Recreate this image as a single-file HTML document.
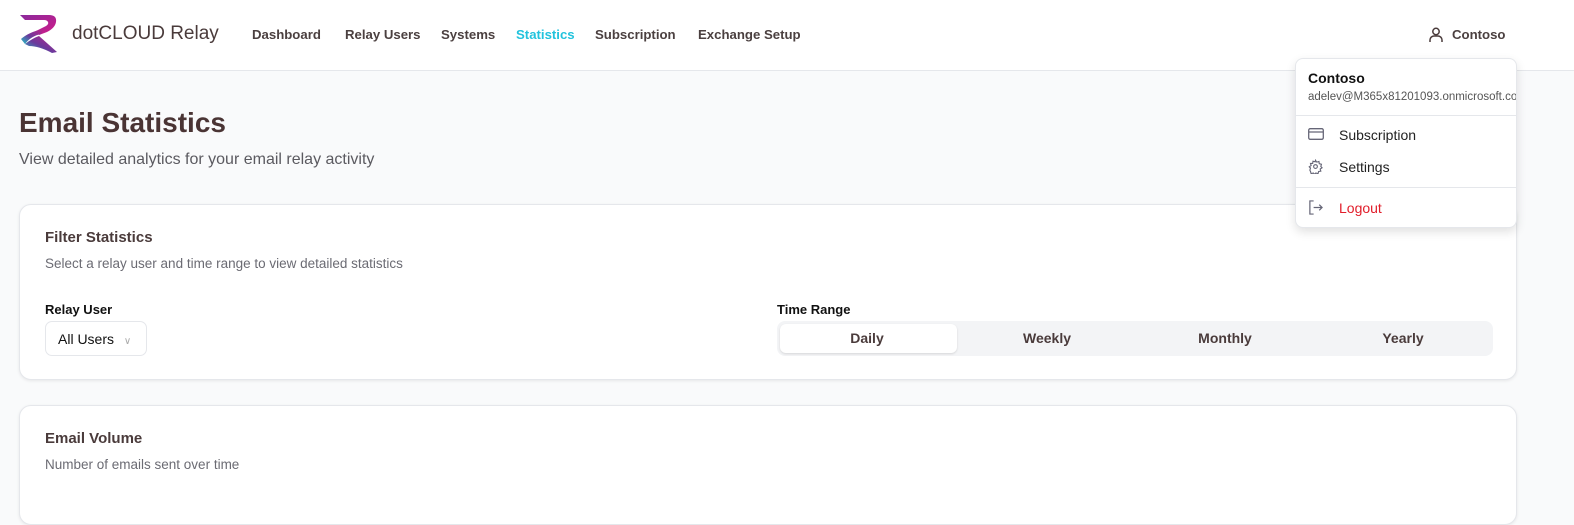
<!DOCTYPE html>
<html><head><meta charset="utf-8"><style>
*{box-sizing:border-box;margin:0;padding:0}
body{width:1574px;height:500px;overflow:hidden;background:#f9fafb;font-family:"Liberation Sans",sans-serif;color:#4a3b3b;position:relative}
.hdr{position:absolute;left:0;top:0;width:1574px;height:71px;background:#fff;border-bottom:1px solid #e5e7eb}
.brand{position:absolute;left:72px;top:23px;font-size:19px;color:#4a3b3b}
.nav{position:absolute;top:27px;font-size:13.2px;font-weight:bold;color:#4b4040}
h1{position:absolute;left:19px;top:107px;font-size:28px;font-weight:bold;color:#4a3434}
.sub{position:absolute;left:19px;top:151px;font-size:16px;color:#5b5a60}
.card{position:absolute;left:19px;width:1498px;background:#fff;border:1px solid #e5e7eb;border-radius:12px;box-shadow:0 1px 3px rgba(0,0,0,.08)}
.ct{position:absolute;left:25px;font-size:15px;font-weight:bold;color:#4a3b3b}
.cs{position:absolute;left:25px;font-size:13.5px;color:#6b6b73}
.lbl{position:absolute;font-size:13px;font-weight:bold;color:#111}
.menu{position:absolute;left:1295px;top:58px;width:222px;height:170px;background:#fff;border:1px solid #e5e7eb;border-radius:8px;box-shadow:0 4px 10px rgba(0,0,0,.12);overflow:hidden}
.mi{position:absolute;left:43px;font-size:14px;color:#222}
</style></head><body>
<div class="hdr">
<svg style="position:absolute;left:19px;top:14px" width="40" height="40" viewBox="0 0 40 40">
<defs><linearGradient id="g" x1="0" y1="1" x2="1" y2="0"><stop offset="0" stop-color="#1fc8c8"/><stop offset=".45" stop-color="#6a3a9c"/><stop offset="1" stop-color="#c0208a"/></linearGradient>
<linearGradient id="g2" x1="0" y1="0" x2="1" y2="1"><stop offset="0" stop-color="#8a2a9c"/><stop offset="1" stop-color="#d01c8a"/></linearGradient></defs>
<path d="M1 1H30Q38 1 37 8Q36 14 28 18L20 21 17 17 27 12Q30 10 29 8Q28 6 25 6H6Z" fill="url(#g2)"/>
<path d="M2 25Q10 18 24 15L22 20Q12 22 6 30Z" fill="url(#g)"/>
<path d="M6 30Q14 24 20 22L38 38 33 39Q20 32 10 32Z" fill="url(#g)"/>
</svg>
<div class="brand">dotCLOUD Relay</div>
<div class="nav" style="left:252px">Dashboard</div>
<div class="nav" style="left:345px">Relay Users</div>
<div class="nav" style="left:441px">Systems</div>
<div class="nav" style="left:516px;color:#22c3dd">Statistics</div>
<div class="nav" style="left:595px">Subscription</div>
<div class="nav" style="left:698px">Exchange Setup</div>
<svg style="position:absolute;left:1429px;top:27px" width="14" height="16" viewBox="0 0 14 16" fill="none" stroke="#4a3b3b" stroke-width="1.5"><circle cx="7" cy="4.5" r="3.2"/><path d="M1 15v-2a4 4 0 0 1 4-4h4a4 4 0 0 1 4 4v2"/></svg>
<div class="nav" style="left:1452px">Contoso</div>
</div>
<h1>Email Statistics</h1>
<div class="sub">View detailed analytics for your email relay activity</div>
<div class="card" style="top:204px;height:176px">
<div class="ct" style="top:24px">Filter Statistics</div>
<div class="cs" style="top:51px">Select a relay user and time range to view detailed statistics</div>
<div class="lbl" style="left:25px;top:97px">Relay User</div>
<div style="position:absolute;left:25px;top:116px;width:102px;height:35px;border:1px solid #e5e7eb;border-radius:7px;font-size:14px;color:#111;padding:9px 0 0 12px">All Users <span style="color:#aaa;font-size:10px;margin-left:6px">&#8744;</span></div>
<div class="lbl" style="left:757px;top:97px">Time Range</div>
<div style="position:absolute;left:757px;top:116px;width:716px;height:35px;background:#f3f4f6;border-radius:8px">
<div style="position:absolute;left:3px;top:3px;width:177px;height:29px;background:#fff;border-radius:6px;box-shadow:0 1px 2px rgba(0,0,0,.12)"></div>
<div style="position:absolute;left:0;top:9px;width:716px;display:flex;font-size:14px;font-weight:bold;color:#4a3b3b"><span style="width:180px;text-align:center">Daily</span><span style="width:180px;text-align:center">Weekly</span><span style="width:176px;text-align:center">Monthly</span><span style="width:180px;text-align:center">Yearly</span></div>
</div>
</div>
<div class="card" style="top:405px;height:120px">
<div class="ct" style="top:24px">Email Volume</div>
<div class="cs" style="top:51px">Number of emails sent over time</div>
</div>
<div class="menu">
<div style="position:absolute;left:12px;top:11px;font-size:14px;font-weight:bold;color:#111">Contoso</div>
<div style="position:absolute;left:12px;top:32px;font-size:11.5px;color:#555;white-space:nowrap">adelev@M365x81201093.onmicrosoft.com</div>
<div style="position:absolute;left:0;top:56px;width:100%;border-top:1px solid #e5e7eb"></div>
<svg style="position:absolute;left:12px;top:69px" width="16" height="12" viewBox="0 0 16 12" fill="none" stroke="#667" stroke-width="1.3"><rect x=".7" y=".7" width="14.6" height="10.6" rx="1.5"/><path d="M1 4h14"/></svg>
<div class="mi" style="top:68px">Subscription</div>
<svg style="position:absolute;left:12px;top:100px" width="15" height="15" viewBox="0 0 24 24" fill="none" stroke="#667" stroke-width="1.8"><circle cx="12" cy="12" r="3"/><path d="M12 2l2 3 3.5-1 .5 3.5 3.5 1-1 3.5 2 2-3 2 1 3.5-3.5.5-1 3.5-3.5-1-2 2-2-2-3.5 1-1-3.5L3 18l1-3.5-2-2 3-2-1-3.5L7.5 7 8 3.5 11.5 4.5Z"/></svg>
<div class="mi" style="top:100px">Settings</div>
<div style="position:absolute;left:0;top:128px;width:100%;border-top:1px solid #e5e7eb"></div>
<svg style="position:absolute;left:12px;top:141px" width="15" height="15" viewBox="0 0 16 16" fill="none" stroke="#667" stroke-width="1.3"><path d="M6 1H2v14h4M6 8h9M12 5l3 3-3 3"/></svg>
<div class="mi" style="top:141px;color:#e11d2a">Logout</div>
</div>
</body></html>
